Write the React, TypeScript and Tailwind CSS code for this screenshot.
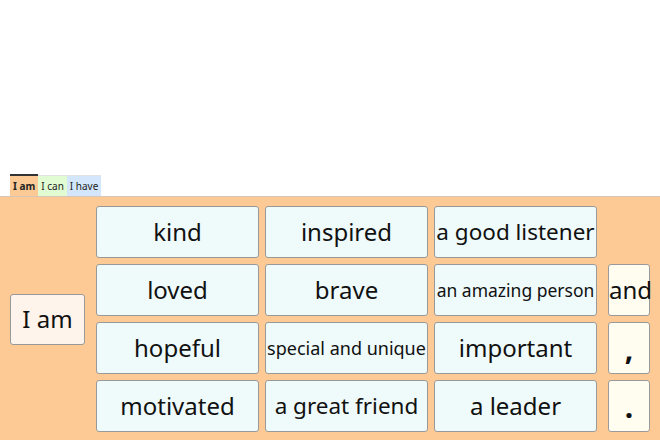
import React, { useState } from 'react';

type Word = { text: string; size?: string };

const grid: Word[][] = [
    [{ text: 'kind' }, { text: 'inspired' }, { text: 'a good listener', size: 'text-[22.5px]' }],
    [{ text: 'loved' }, { text: 'brave' }, { text: 'an amazing person', size: 'text-[17.5px]' }],
    [{ text: 'hopeful' }, { text: 'special and unique', size: 'text-[18px]' }, { text: 'important' }],
    [{ text: 'motivated' }, { text: 'a great friend', size: 'text-[22.5px]' }, { text: 'a leader' }],
];

const extras: Word[] = [
    { text: '' },
    { text: 'and', size: 'text-[24px]' },
    { text: ',', size: 'text-[30px] font-bold' },
    { text: '.', size: 'text-[30px] font-bold' },
];

const tabs = [
    { label: 'I am', bg: 'bg-[#fdca96]' },
    { label: 'I can', bg: 'bg-[#e1fbd2]' },
    { label: 'I have', bg: 'bg-[#d3e6fb]' },
];

const App: React.FC = () => {
    const [active, setActive] = useState(0);
    const [sentence, setSentence] = useState<string[]>([]);

    const font = { fontFamily: '"Noto Sans", "DejaVu Sans", sans-serif' };

    return (
        <div className="h-screen w-full flex flex-col bg-white" style={font}>
            <div className="flex-1 text-sm text-gray-500 px-3 pt-2">{sentence.join(' ')}</div>

            <div className="flex px-[10px] h-[22px] items-end">
                {tabs.map((tab, i) => (
                    <button
                        key={tab.label}
                        onClick={() => setActive(i)}
                        className={`h-[21px] px-[3px] text-[10px] leading-none text-[#222] ${tab.bg} ${
                            active === i ? 'font-bold border-t-2 border-[#333] h-[22px]' : 'border-t border-[#e2e2e2]'
                        }`}
                    >
                        {tab.label}
                    </button>
                ))}
            </div>

            <div className="bg-[#fdca96] border-t border-[#d8c6b4] h-[244px] flex items-center pl-[10px] pt-[1px]">
                <button
                    onClick={() => setSentence(['I am'])}
                    className="w-[75px] h-[51px] bg-[#fff4ec] border border-[#999] rounded-[3px] text-[24px] text-[#111]"
                >
                    I am
                </button>

                <div className="ml-[11px] grid grid-cols-[163px_163px_163px] gap-x-[6px] gap-y-[6px]">
                    {grid.flat().map((w) => (
                        <button
                            key={w.text}
                            onClick={() => setSentence((s) => [...s, w.text])}
                            className={`h-[52px] bg-[#effafa] border border-[#999] rounded-[3px] text-[#111] whitespace-nowrap ${
                                w.size ?? 'text-[24px]'
                            }`}
                        >
                            {w.text}
                        </button>
                    ))}
                </div>

                <div className="ml-[11px] flex flex-col gap-[6px]">
                    {extras.map((e, i) =>
                        e.text ? (
                            <button
                                key={i}
                                onClick={() => setSentence((s) => [...s, e.text])}
                                className={`w-[42px] h-[52px] bg-[#fffdf0] border border-[#999] rounded-[3px] text-[#111] ${e.size}`}
                            >
                                {e.text}
                            </button>
                        ) : (
                            <div key={i} className="w-[42px] h-[52px]" />
                        )
                    )}
                </div>
            </div>
        </div>
    );
};

export default App;
